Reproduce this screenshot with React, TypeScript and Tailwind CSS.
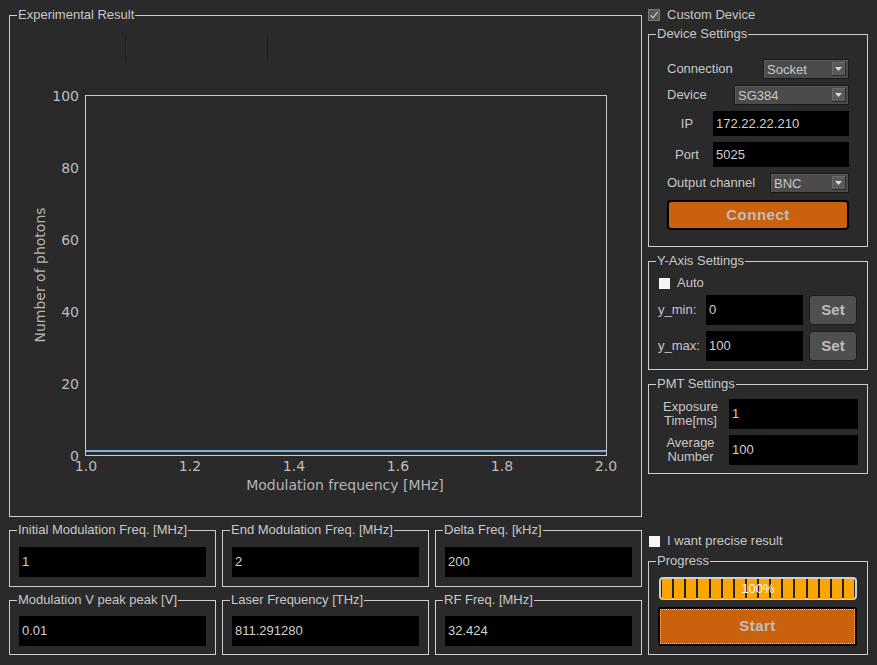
import type { ReactNode } from "react";

function Group({
  title,
  className = "",
  children,
}: {
  title: string;
  className?: string;
  children: ReactNode;
}) {
  return (
    <fieldset className={`min-w-0 border border-[#cdcdcd] ${className}`}>
      <legend className="ml-[7px] px-[1px] text-[13px] leading-[14px] text-[#c8c8c8]">
        {title}
      </legend>
      {children}
    </fieldset>
  );
}

function Field({ value, className = "" }: { value: string; className?: string }) {
  return (
    <div className={`flex items-center bg-black pl-[3px] text-[13px] text-[#d0d0d0] ${className}`}>
      {value}
    </div>
  );
}

function Combo({ value, className = "" }: { value: string; className?: string }) {
  return (
    <div
      className={`flex h-[20px] items-center justify-between border border-[#1a1a1a] bg-[#4b4b4b] pl-[3px] pr-[2px] shadow-[inset_1px_1px_0_#5c5c5c] ${className}`}
    >
      <span className="text-[13px] leading-none text-[#c8c8c8]">{value}</span>
      <span className="flex h-[14px] w-[14px] items-center justify-center border-b border-r border-[#2a2a2a] bg-[#595959] shadow-[inset_1px_1px_0_#6a6a6a]">
        <svg width="7" height="4" viewBox="0 0 7 4">
          <path d="M0 0h7L3.5 4z" fill="#dadada" />
        </svg>
      </span>
    </div>
  );
}

function Check({ checked = false, className = "" }: { checked?: boolean; className?: string }) {
  if (checked) {
    return (
      <span className={`flex h-[12px] w-[12px] items-center justify-center border border-[#7a7a7a] bg-[#585858] ${className}`}>
        <svg width="10" height="10" viewBox="0 0 10 10">
          <path d="M1.5 5.2 4 7.8 8.6 1.8" fill="none" stroke="#c4c4c4" strokeWidth="1.3" />
        </svg>
      </span>
    );
  }
  return <span className={`block h-[11px] w-[11px] bg-[#f4f4f4] ${className}`} />;
}

function Chart() {
  const yTicks = [0, 20, 40, 60, 80, 100];
  const xTicks = ["1.0", "1.2", "1.4", "1.6", "1.8", "2.0"];
  return (
    <svg
      width={631}
      height={494}
      className="block"
      fontFamily="'DejaVu Sans', sans-serif"
      fontSize={14}
    >
      <line x1={115.5} y1={13} x2={115.5} y2={40} stroke="#202020" />
      <line x1={257.5} y1={13} x2={257.5} y2={40} stroke="#202020" />
      <rect x={75.5} y={73.5} width={521} height={360} fill="none" stroke="#c8c8c8" />
      <line x1={76} y1={429} x2={596} y2={429} stroke="#7fb0dc" strokeWidth={2} />
      {yTicks.map((v) => (
        <text
          key={v}
          x={69}
          y={433.5 - v * 3.6}
          textAnchor="end"
          dominantBaseline="central"
          fill="#bdbdbd"
        >
          {v}
        </text>
      ))}
      {xTicks.map((t, i) => (
        <text
          key={t}
          x={76 + i * 104}
          y={443.5}
          textAnchor="middle"
          dominantBaseline="central"
          fill="#bdbdbd"
        >
          {t}
        </text>
      ))}
      <text x={335} y={463} textAnchor="middle" dominantBaseline="central" fill="#b4b4b4">
        Modulation frequency [MHz]
      </text>
      <text
        transform="translate(30 253) rotate(-90)"
        textAnchor="middle"
        dominantBaseline="central"
        fill="#b4b4b4"
      >
        Number of photons
      </text>
    </svg>
  );
}

function ParamGroup({ title, value, top }: { title: string; value: string; top?: boolean }) {
  return (
    <Group title={title}>
      <div className={top ? "px-[9px] pt-[10px] pb-[9px]" : "px-[9px] pt-[9px] pb-[8px]"}>
        <Field value={value} className="h-[30px]" />
      </div>
    </Group>
  );
}

export default function App() {
  return (
    <div className="h-[665px] w-[877px] overflow-hidden bg-[#2a2a2a] font-['Liberation_Sans',Arial,sans-serif] text-[13px] text-[#c8c8c8]">
      <div className="flex gap-[6px] pl-[9px] pt-[8px]">
        {/* left: plot + parameters */}
        <div className="flex w-[633px] flex-col">
          <Group title="Experimental Result">
            <Chart />
          </Group>
          <div className="mt-[6px] grid grid-cols-3 gap-[6px]">
            <ParamGroup title="Initial Modulation Freq. [MHz]" value="1" top />
            <ParamGroup title="End Modulation Freq. [MHz]" value="2" top />
            <ParamGroup title="Delta Freq. [kHz]" value="200" top />
            <ParamGroup title="Modulation V peak peak [V]" value="0.01" />
            <ParamGroup title="Laser Frequency [THz]" value="811.291280" />
            <ParamGroup title="RF Freq. [MHz]" value="32.424" />
          </div>
        </div>

        {/* right: settings */}
        <div className="flex w-[220px] flex-col">
          <div className="flex h-[14px] items-center gap-[7px]">
            <Check checked />
            <span>Custom Device</span>
          </div>

          <Group title="Device Settings" className="mt-[5px]">
            <div className="flex flex-col px-[18px] pt-[18px] pb-[16px]">
              <div className="flex h-[20px] items-center justify-between">
                <span>Connection</span>
                <Combo value="Socket" className="w-[86px]" />
              </div>
              <div className="mt-[6px] flex h-[20px] items-center justify-between">
                <span>Device</span>
                <Combo value="SG384" className="w-[115px]" />
              </div>
              <div className="mt-[6px] flex h-[25px] items-center gap-[6px]">
                <span className="w-[40px] text-center">IP</span>
                <Field value="172.22.22.210" className="h-full flex-1" />
              </div>
              <div className="mt-[6px] flex h-[25px] items-center gap-[6px]">
                <span className="w-[40px] text-center">Port</span>
                <Field value="5025" className="h-full flex-1" />
              </div>
              <div className="mt-[6px] flex h-[20px] items-center justify-between">
                <span>Output channel</span>
                <Combo value="BNC" className="w-[79px]" />
              </div>
              <button className="mt-[7px] flex h-[30px] items-center justify-center rounded-[4px] border-2 border-black bg-[#c9610d] text-[15px] font-bold tracking-[0.5px] text-[#bdbdbd]">
                Connect
              </button>
            </div>
          </Group>

          <Group title="Y-Axis Settings" className="mt-[7px]">
            <div className="flex flex-col pl-[9px] pr-[10px] pt-[8px] pb-[8px]">
              <div className="flex h-[14px] items-center gap-[7px] pl-[1px]">
                <Check />
                <span>Auto</span>
              </div>
              {[
                ["y_min:", "0"],
                ["y_max:", "100"],
              ].map(([label, v], i) => (
                <div key={label} className={`flex h-[30px] items-center ${i === 0 ? "mt-[5px]" : "mt-[6px]"}`}>
                  <span className="w-[48px]">{label}</span>
                  <Field value={v} className="h-full w-[97px]" />
                  <button className="ml-[6px] h-full w-[48px] rounded-[4px] border border-[#1c1c1c] bg-[#4f4f4f] text-[15px] font-bold text-[#bdbdbd]">
                    Set
                  </button>
                </div>
              ))}
            </div>
          </Group>

          <Group title="PMT Settings" className="mt-[7px]">
            <div className="flex flex-col gap-[6px] px-[9px] pt-[8px] pb-[8px]">
              {[
                ["Exposure", "Time[ms]", "1"],
                ["Average", "Number", "100"],
              ].map(([a, b, v]) => (
                <div key={a} className="flex h-[30px] items-center gap-[6px]">
                  <span className="w-[65px] text-center leading-[14px]">
                    {a}
                    <br />
                    {b}
                  </span>
                  <Field value={v} className="h-full w-[129px]" />
                </div>
              ))}
            </div>
          </Group>

          <div className="mt-[60px] flex h-[14px] items-center gap-[7px] pl-[1px]">
            <Check />
            <span>I want precise result</span>
          </div>

          <Group title="Progress" className="mt-[6px]">
            <div className="flex flex-col px-[10px] pt-[9px] pb-[8px]">
              <div className="grid h-[23px] rounded-[4px] border-2 border-[#cfcfcf] bg-[#222] px-[1px]">
                <div className="col-start-1 row-start-1 flex gap-[2px]">
                  {Array.from({ length: 16 }).map((_, i) => (
                    <span key={i} className="flex-1 bg-[#ffa500]" />
                  ))}
                </div>
                <span className="col-start-1 row-start-1 flex items-center justify-center text-[13px] text-white">
                  100%
                </span>
              </div>
              <button className="mt-[7px] ml-[-1px] h-[39px] rounded-[3px] border-2 border-black bg-[#c9610d]">
                <span className="flex h-full items-center justify-center border border-dotted border-[#c8c8c8] text-[15px] font-bold tracking-[0.5px] text-[#bdbdbd]">
                  Start
                </span>
              </button>
            </div>
          </Group>
        </div>
      </div>
    </div>
  );
}
